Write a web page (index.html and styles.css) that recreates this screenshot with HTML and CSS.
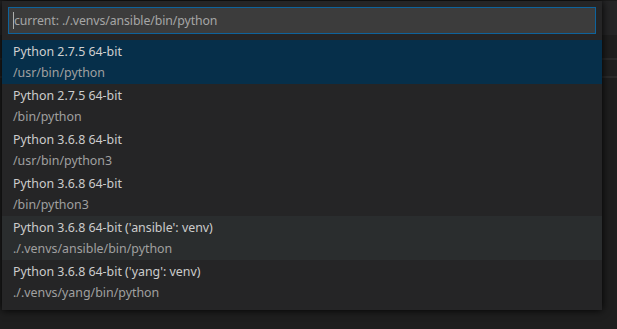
FILE: index.html
```html
<!DOCTYPE html>
<html>
<head>
<meta charset="utf-8">
<link rel="stylesheet" href="styles.css">
</head>
<body>
<div class="backdrop">
  <div class="bg-top"></div>
  <div class="bg-tab"></div>
  <div class="bg-crumb"></div>
  <div class="bg-editor"></div>
</div>
<div class="quick-pick">
  <div class="input-wrap">
    <div class="input"><span class="caret"></span><span class="placeholder">current: ./.venvs/ansible/bin/python</span></div>
  </div>
  <div class="list">
    <div class="row selected"><div class="title">Python 2.7.5 64-bit</div><div class="desc">/usr/bin/python</div></div>
    <div class="row"><div class="title">Python 2.7.5 64-bit</div><div class="desc">/bin/python</div></div>
    <div class="row"><div class="title">Python 3.6.8 64-bit</div><div class="desc">/usr/bin/python3</div></div>
    <div class="row"><div class="title">Python 3.6.8 64-bit</div><div class="desc">/bin/python3</div></div>
    <div class="row hover"><div class="title">Python 3.6.8 64-bit ('ansible': venv)</div><div class="desc">./.venvs/ansible/bin/python</div></div>
    <div class="row"><div class="title">Python 3.6.8 64-bit ('yang': venv)</div><div class="desc">./.venvs/yang/bin/python</div></div>
  </div>
</div>
</body>
</html>
```
FILE: styles.css
```css
html, body {
  margin: 0;
  padding: 0;
  width: 617px;
  height: 329px;
  overflow: hidden;
  background: #1e1e1e;
  font-family: "Noto Sans", "Open Sans", sans-serif;
}
.backdrop {
  display: flex;
  flex-direction: column;
  height: 329px;
}
.bg-top {
  height: 1px;
  background: #1b1b1b;
}
.bg-tab {
  height: 34px;
  background: #252526;
}
.bg-crumb {
  height: 23px;
  background: #1e1e1e;
  border-bottom: 2px solid #2a2a2a;
}
.bg-editor {
  flex: 1;
  background: #1e1e1e;
  border-top: 16px solid #1f1f1f;
  box-shadow: inset 0 2px 0 #2a2a2a;
}
.quick-pick {
  position: absolute;
  left: 2px;
  top: 1px;
  width: 600px;
  height: 309px;
  background: #252526;
  box-shadow: 0 0 8px #000;
}
.input-wrap {
  padding: 6px;
}
.input {
  height: 25px;
  border: 1px solid #0e639c;
  background: #3c3c3c;
  display: flex;
  align-items: center;
  padding-left: 4px;
  font-size: 12.3px;
  letter-spacing: -0.1px;
}
.caret {
  width: 1px;
  height: 17px;
  background: #aeafad;
}
.placeholder {
  color: #a6a6a6;
}
.list {
  display: flex;
  flex-direction: column;
}
.row {
  height: 44px;
  padding-left: 11px;
  display: flex;
  flex-direction: column;
  justify-content: center;
  font-size: 12.4px;
}
.row.selected {
  background: #062f4a;
}
.row.hover {
  background: #2a2d2e;
}
.title {
  color: #cccccc;
  line-height: 21px;
}
.desc {
  color: #a0a0a0;
  line-height: 21px;
}
.selected .title {
  color: #d0d0d0;
}
```
